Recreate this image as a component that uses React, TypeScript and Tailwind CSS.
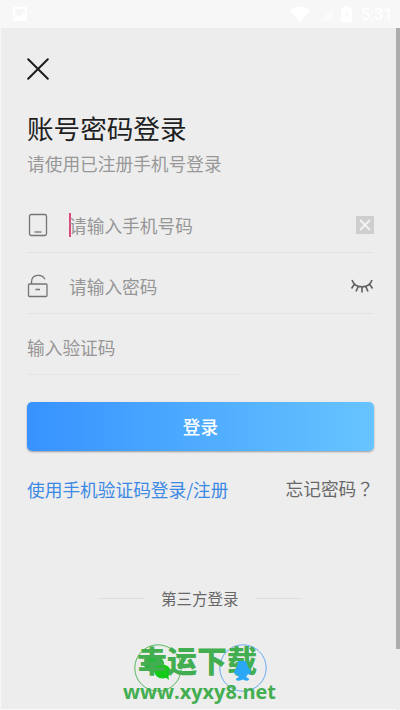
import type { ReactNode } from "react";

function StatusBar() {
  return (
    <header className="flex h-7 items-center bg-[#f7f7f7] pl-[12px] pr-[9px] text-white">
      <svg width="14" height="14" viewBox="0 0 14 14" className="shrink-0">
        <path fillRule="evenodd" fill="currentColor" d="M0 0H14V14H0ZM2 2V11L5 8L7 10L10 6L12 8V2Z" />
      </svg>
      <svg width="20" height="16" viewBox="0 0 20 16" className="ml-auto">
        <path fill="currentColor" d="M0 4Q10-3 20 4L10 16Z" />
      </svg>
      <svg width="14" height="14" viewBox="0 0 14 14" className="ml-[9px] text-[#fafafa]">
        <path fill="currentColor" d="M14 0V14H0Z" />
      </svg>
      <svg width="11" height="16" viewBox="0 0 11 16" className="ml-[8px]">
        <path fillRule="evenodd" fill="currentColor" d="M3 0H8V2H11V16H0V2H3ZM6 4L3 9H5V13L8 8H6Z" />
      </svg>
      <span className="ml-[9px] mt-[2px] w-[30px] text-right font-[Roboto] text-base font-medium leading-none">5:31</span>
    </header>
  );
}

function PhoneIcon() {
  return (
    <svg width="22" height="24" viewBox="0 0 22 24" fill="none" stroke="#747474" strokeWidth="1.3">
      <rect x="2.5" y="1.5" width="17" height="21" rx="1.8" />
      <path d="M7.5 19H14.5" />
    </svg>
  );
}

function LockIcon() {
  return (
    <svg width="22" height="24" viewBox="0 0 22 24" fill="none" stroke="#747474" strokeWidth="1.3">
      <rect x="1.5" y="10" width="18.5" height="12.5" rx="1" />
      <path d="M4.5 10V8.2C4.5-.2 15-.5 18 5.3M8.5 15.5H13" />
    </svg>
  );
}

function ClosedEyeIcon() {
  return (
    <svg width="24" height="16" viewBox="0 0 24 16" fill="none" stroke="#606060" strokeWidth="1.6">
      <path d="M2 2C5 11 19 11 22 2M4.5 6L1.5 10.5M8.2 8.5L6 13.5M12 9V14.5M15.8 8.5L18 13.5M19.5 6L22.5 10.5" />
    </svg>
  );
}

function Field({ icon, children, action }: { icon: ReactNode; children: ReactNode; action: ReactNode }) {
  return (
    <div className="flex h-[61px] items-center border-b border-[#e3e3e3] pt-[6px]">
      <span className="w-[42px]">{icon}</span>
      <span className="flex flex-1 items-center whitespace-nowrap text-[#969696]">{children}</span>
      {action}
    </div>
  );
}

function SocialLogins() {
  return (
    <div className="relative mt-8 h-[65px]">
      <div className="flex pl-[107px]">
        <svg width="48" height="48" viewBox="0 0 48 48">
          <circle cx="24" cy="24" r="23.2" fill="none" stroke="#55b95c" />
          <ellipse cx="20" cy="20" rx="10" ry="8.5" fill="#22b83b" />
          <ellipse cx="28.5" cy="27.5" rx="8" ry="7" fill="#12cb17" />
          <path d="M31 33L35 36L34 30" fill="#12cb17" />
        </svg>
        <svg width="48" height="48" viewBox="0 0 48 48" className="ml-[37px]">
          <circle cx="24" cy="24" r="23.2" fill="none" stroke="#67aaf0" />
        </svg>
      </div>
      <div className="absolute left-[94px] top-[-2px] whitespace-nowrap font-bold text-[#43ae50]">
        <p className="ml-[16px] h-[34px] text-[30px] font-black leading-[34px]">幸运下载</p>
        <p className="ml-[2px] mt-[3px] font-['Open_Sans'] text-[19.9px] leading-[26px]">www.xyxy8.net</p>
      </div>
      {/* penguin body sits above the lettering */}
      <svg width="18" height="20" viewBox="0 0 18 20" className="absolute left-[207px] top-[17px]">
        <path
          fill="#2aa7f5"
          d="M4 0H12L14 6Q18 10 16 14L14 13Q13 15 12 16Q17 18 14 19.5Q11 20 9 18.5Q6 20 3 19.5Q0 18 5 16Q3 15 3 13L1 14Q-1 10 3 6Z"
        />
      </svg>
    </div>
  );
}

export default function App() {
  return (
    <div className="h-[710px] w-[400px] overflow-hidden border-l border-[#f8f8f8] bg-[#ededed] font-['Noto_Sans_CJK_SC',sans-serif] text-[17.7px]">
      <StatusBar />
      <div className="flex">
        <main className="h-[682px] w-[395px] shrink-0 border-b border-[#f8f8f8] pl-[26px] pr-[22px]">
          <svg width="22" height="22" viewBox="0 0 22 22" className="mt-[30px]" stroke="#1d1d1d" strokeWidth="2" strokeLinecap="round">
            <path d="M1.2 1.2L20.8 20.8M20.8 1.2L1.2 20.8" />
          </svg>
          <h1 className="mt-[28px] h-10 text-[26.6px] leading-10 text-[#1f1f1f]">账号密码登录</h1>
          <p className="h-[30px] leading-[30px] text-[#989898]">请使用已注册手机号登录</p>
          <div className="mt-[14px]">
            <Field
              icon={<PhoneIcon />}
              action={
                <svg width="18" height="18" viewBox="0 0 18 18" className="bg-[#cecece]" stroke="#f3f3f3" strokeWidth="1.8">
                  <path d="M4 4L14 14M14 4L4 14" />
                </svg>
              }
            >
              <i className="-mr-[1.5px] h-6 w-[1.5px] bg-[#d94b7c]" />
              请输入手机号码
            </Field>
            <Field icon={<LockIcon />} action={<ClosedEyeIcon />}>
              请输入密码
            </Field>
          </div>
          <div className="flex h-[61px] w-[213px] items-center border-b border-[#e5e5e5] pt-[6px] text-[#969696]">
            输入验证码
          </div>
          <button className="mt-[27px] block h-[49px] w-full rounded-[5px] bg-linear-to-r from-[#3792ff] to-[#67c4ff] font-medium text-white shadow-[0_1px_2px_rgba(0,0,0,0.35)]">
            登录
          </button>
          <div className="mt-[24px] flex h-[28px] items-center justify-between whitespace-nowrap">
            <a className="text-[#3b89e5]">使用手机验证码登录/注册</a>
            <a className="mb-[2px] text-[#686868]">
              忘记密码<span className="font-['Noto_Sans_CJK_TC',sans-serif]">？</span>
            </a>
          </div>
          <div className="mt-[81px] flex h-7 items-center pl-[72px] text-[15.5px] text-[#686868]">
            <i className="h-px w-[45px] bg-[#dedede]" />
            <span className="mx-[17px] mt-[2px] whitespace-nowrap">第三方登录</span>
            <i className="h-px w-[45px] bg-[#dedede]" />
          </div>
          <SocialLogins />
        </main>
        <div className="h-[621px] w-1 shrink-0 bg-[#adadad]" />
      </div>
    </div>
  );
}
